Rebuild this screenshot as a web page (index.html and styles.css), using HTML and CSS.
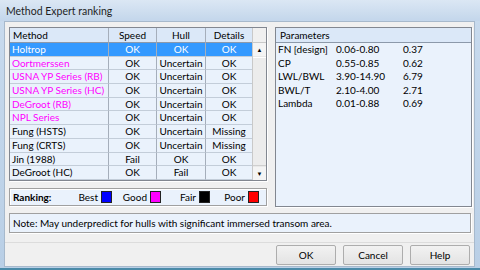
FILE: index.html
```html
<!DOCTYPE html>
<html lang="en">
  <head>
    <meta charset="UTF-8" />
    <title>Method Expert ranking</title>
    <link rel="stylesheet" href="styles.css">
  </head>
  <body>
    <div class="window">
      <div class="titlebar">Method Expert ranking</div>
      <div class="client">
        <div class="main">
          <div class="left">
            <div class="grid">
              <div class="grid-body">
                <div class="row head">
                  <div class="cell name">Method</div>
                  <div class="cell">Speed</div>
                  <div class="cell">Hull</div>
                  <div class="cell">Details</div>
                </div>
                <div class="row selected">
                  <div class="cell name">Holtrop</div>
                  <div class="cell">OK</div>
                  <div class="cell">OK</div>
                  <div class="cell">OK</div>
                </div>
                <div class="row good">
                  <div class="cell name">Oortmerssen</div>
                  <div class="cell">OK</div>
                  <div class="cell">Uncertain</div>
                  <div class="cell">OK</div>
                </div>
                <div class="row good">
                  <div class="cell name">USNA YP Series (RB)</div>
                  <div class="cell">OK</div>
                  <div class="cell">Uncertain</div>
                  <div class="cell">OK</div>
                </div>
                <div class="row good">
                  <div class="cell name">USNA YP Series (HC)</div>
                  <div class="cell">OK</div>
                  <div class="cell">Uncertain</div>
                  <div class="cell">OK</div>
                </div>
                <div class="row good">
                  <div class="cell name">DeGroot (RB)</div>
                  <div class="cell">OK</div>
                  <div class="cell">Uncertain</div>
                  <div class="cell">OK</div>
                </div>
                <div class="row good">
                  <div class="cell name">NPL Series</div>
                  <div class="cell">OK</div>
                  <div class="cell">Uncertain</div>
                  <div class="cell">OK</div>
                </div>
                <div class="row">
                  <div class="cell name">Fung (HSTS)</div>
                  <div class="cell">OK</div>
                  <div class="cell">Uncertain</div>
                  <div class="cell">Missing</div>
                </div>
                <div class="row">
                  <div class="cell name">Fung (CRTS)</div>
                  <div class="cell">OK</div>
                  <div class="cell">Uncertain</div>
                  <div class="cell">Missing</div>
                </div>
                <div class="row">
                  <div class="cell name">Jin (1988)</div>
                  <div class="cell">Fail</div>
                  <div class="cell">OK</div>
                  <div class="cell">OK</div>
                </div>
                <div class="row">
                  <div class="cell name">DeGroot (HC)</div>
                  <div class="cell">OK</div>
                  <div class="cell">Fail</div>
                  <div class="cell">OK</div>
                </div>
              </div>
              <div class="scrollbar">
                <div class="sb-corner"></div>
                <div class="sb-btn">&#9650;</div>
                <div class="sb-thumb"></div>
                <div class="sb-btn">&#9660;</div>
              </div>
            </div>

            <div class="legend">
              <span class="legend-title">Ranking:</span>
              <span class="legend-item">Best <i class="swatch best"></i></span>
              <span class="legend-item">Good <i class="swatch good-sw"></i></span>
              <span class="legend-item">Fair <i class="swatch fair"></i></span>
              <span class="legend-item">Poor <i class="swatch poor"></i></span>
            </div>
          </div>

          <div class="params">
            <div class="params-head">Parameters</div>
            <div class="param"><span>FN [design]</span><span>0.06-0.80</span><span>0.37</span></div>
            <div class="param"><span>CP</span><span>0.55-0.85</span><span>0.62</span></div>
            <div class="param"><span>LWL/BWL</span><span>3.90-14.90</span><span>6.79</span></div>
            <div class="param"><span>BWL/T</span><span>2.10-4.00</span><span>2.71</span></div>
            <div class="param"><span>Lambda</span><span>0.01-0.88</span><span>0.69</span></div>
          </div>
        </div>

        <div class="note">Note: May underpredict for hulls with significant immersed transom area.</div>

        <div class="buttons">
          <button>OK</button>
          <button>Cancel</button>
          <button>Help</button>
        </div>
      </div>
    </div>
  </body>
</html>
```

FILE: styles.css
```css
body {
  margin: 0;
  font-family: Lato, "Noto Sans", sans-serif;
  font-size: 10px;
  color: #000;
}

.window {
  width: 480px;
  height: 270px;
  box-sizing: border-box;
  background: linear-gradient(#c9dbee, #b9cfe6);
  border-bottom: 2px solid #4a8aa8;
  padding: 0 5px 1px 4px;
  display: flex;
  flex-direction: column;
}

.titlebar {
  height: 21px;
  line-height: 23px;
  font-size: 10.5px;
  color: #1e1e1e;
  background: linear-gradient(#dbe7f4, #c3d6eb);
  margin: 0 -5px 0 -4px;
  padding-left: 6px;
}

.client {
  flex: 1;
  background: #f0f0f0;
  border: 1px solid #a7b9cc;
  display: flex;
  flex-direction: column;
  padding: 5px 2px 0 4px;
}

.main {
  display: flex;
  gap: 8px;
}

.left {
  width: 258px;
  display: flex;
  flex-direction: column;
  gap: 7px;
}

.grid {
  display: flex;
  height: 154px;
  box-sizing: border-box;
  border: 1px solid #828790;
  background: #eaf2fc;
  box-shadow: 1px 1px 0 #fff;
}

.grid-body {
  flex: 1;
}

.row {
  display: grid;
  grid-template-columns: 99px 48px 49px 1fr;
  height: 13.7px;
  line-height: 13px;
}

.cell {
  border-right: 1px solid #a5aebb;
  border-bottom: 1px solid #c3cdd9;
  text-align: center;
  white-space: nowrap;
  overflow: hidden;
}

.cell:last-child {
  border-right: none;
}

.cell.name {
  text-align: left;
  padding-left: 2px;
}

.row.head {
  height: 15px;
  line-height: 14px;
  background: #dbe8f8;
}

.row.head .cell {
  border-bottom: 1px solid #8c99aa;
}

.row.head .cell.name {
  padding-left: 3px;
}

.row.selected {
  background: #3399ff;
  color: #fff;
}

.row.good .name {
  color: #ff00ff;
}

.scrollbar {
  width: 13px;
  display: flex;
  flex-direction: column;
  background: #e9e9e9;
  border-left: 1px solid #c9c9c9;
}

.sb-corner {
  height: 15px;
  background: #f0f0f0;
  border-bottom: 1px solid #c9c9c9;
  box-sizing: border-box;
}

.sb-btn {
  height: 13px;
  font-size: 6px;
  line-height: 13px;
  text-align: center;
  background: #f4f4f4;
}

.sb-thumb {
  flex: 1;
  margin: 1px 0;
  background: #ececec;
  border-top: 1px solid #fff;
  border-bottom: 1px solid #cfcfcf;
}

.legend {
  height: 18px;
  box-sizing: border-box;
  border: 1px solid #a0a0a0;
  box-shadow: 1px 1px 0 #fff, inset 1px 1px 0 #fff;
  background: #eaf2fc;
  display: flex;
  align-items: center;
  padding: 0 7px 0 3px;
}

.legend-title {
  font-weight: bold;
  flex: 1;
}

.legend-item {
  width: 49px;
  display: flex;
  justify-content: flex-end;
  align-items: center;
  gap: 3px;
}

.swatch {
  display: inline-block;
  width: 9px;
  height: 10px;
  border: 1px solid #222;
}

.best { background: #0000ff; }
.good-sw { background: #ff00ff; }
.fair { background: #000; }
.poor { background: #ff0000; }

.params {
  flex: 1;
  height: 180px;
  box-sizing: border-box;
  border: 1px solid #828790;
  background: #eaf2fc;
  box-shadow: 1px 1px 0 #fff;
}

.params-head {
  height: 15px;
  line-height: 14px;
  box-sizing: border-box;
  padding-left: 4px;
  background: #dbe8f8;
  border-bottom: 1px solid #8c99aa;
}

.param {
  display: grid;
  grid-template-columns: 58px 67px 1fr;
  height: 13.6px;
  line-height: 13.6px;
  padding-left: 2px;
}

.note {
  margin: 6px 1px 0 0;
  height: 20px;
  line-height: 19px;
  box-sizing: border-box;
  border: 1px solid #a0a0a0;
  box-shadow: 1px 1px 0 #fff;
  background: #eaf2fc;
  padding-left: 3px;
}

.buttons {
  margin: 9px -2px 0 -4px;
  padding: 2px 4px 0 0;
  border-top: 1px solid #dcdcdc;
  display: flex;
  justify-content: flex-end;
  gap: 7px;
}

button {
  width: 60px;
  height: 20px;
  font-family: inherit;
  font-size: 10px;
  border: 1px solid #adadad;
  border-radius: 2px;
  background: linear-gradient(#f2f2f2, #e3e3e3);
  padding: 0;
}
```
